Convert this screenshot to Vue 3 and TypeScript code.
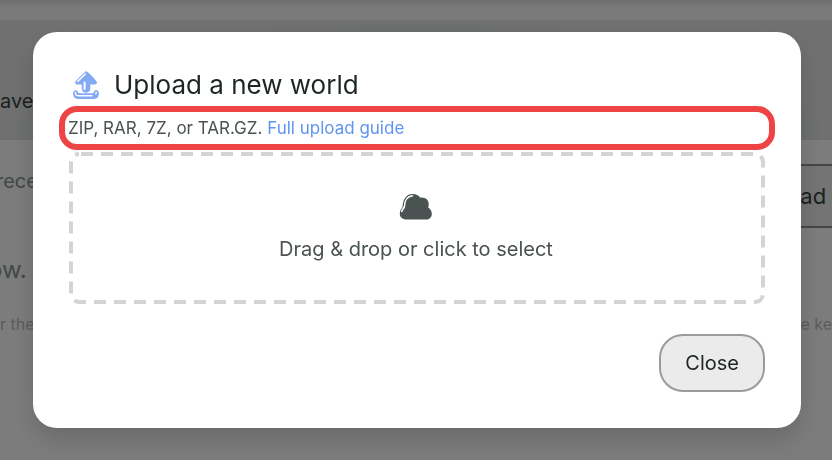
<script setup lang="ts">
import { ref } from 'vue'

const open = ref(true)
const picker = ref<HTMLInputElement | null>(null)

function pickFile(): void {
  picker.value?.click()
}
</script>

<template>
  <div class="page">
    <div class="topbar"></div>
    <div class="hero"><span class="hero-text">ave</span></div>
    <div class="content">
      <div class="row recent">
        <span>rece</span>
        <button type="button" class="page-button">ad W</button>
      </div>
      <p class="row status">ow.</p>
      <div class="row note"><span>r the</span><span>e ke</span></div>
    </div>
  </div>

  <div v-if="open" class="backdrop">
    <section class="modal" role="dialog" aria-modal="true" aria-labelledby="modal-title">
      <header class="heading">
        <svg class="upload-icon" viewBox="0 0 28 30" aria-hidden="true">
          <path d="M14 2C11.300 4 7.500 8.300 4.500 11.200C3.200 12.800 4 14 5.500 13.800H10.500V18.500C10.500 23 17.500 23 17.500 18.500V13.800H22.500C24.300 13.800 24.800 12.600 23.500 11.200C20.800 8 17.400 4.200 14 2Z" fill="#84a9f5" stroke="#84a9f5" stroke-width="1.500" stroke-linejoin="round" />
          <path d="M5.800 11.300L13.200 4" fill="none" stroke="#fff" stroke-width="1.600" stroke-linecap="round" />
          <path d="M12.600 12.500V19" fill="none" stroke="#fff" stroke-width="2" stroke-linecap="round" />
          <path d="M2.500 21.500C1.500 22.500 1.500 26 3.500 27.500Q4.300 28.200 6 28.200H22Q24 28.200 25 27C26.600 25 26.500 22.500 25.500 21.500C24 20 22.500 21.500 22.300 23Q22 24 20.500 24H7.500Q6 24 5.700 23C5.300 21.300 3.800 20.300 2.500 21.500Z" fill="#84a9f5" stroke="#84a9f5" stroke-width="1.500" stroke-linejoin="round" />
          <path d="M3.500 22.500Q3.200 25.600 6 25.800H20M23.800 23.800L24.300 22.500" fill="none" stroke="#fff" stroke-width="1.400" stroke-linecap="round" />
        </svg>
        <h1 id="modal-title">Upload a new world</h1>
      </header>

      <p class="formats">ZIP, RAR, 7Z, or TAR.GZ. <a href="#guide">Full upload guide</a></p>

      <button type="button" class="dropzone" @click="pickFile">
        <svg class="outline" aria-hidden="true">
          <rect class="outline-rect" x="2" y="2" rx="8" />
        </svg>
        <svg class="cloud-icon" viewBox="0 0 34 28" aria-hidden="true">
          <path d="M8 26.500C3 26.500 .800 24 .800 20.500C.800 17.500 2.300 15.800 3.500 14.300C3.800 7 7 1.200 13.500 1.100C17 1 19.500 2.500 21.500 4.700C26 4 29.700 7 29.700 11C29.700 12.500 29.500 13.500 29.200 14.500C31.500 16 32.800 18 32.800 21C32.800 24.500 30.300 26.500 27 26.500Z" fill="#4a5351" />
          <path d="M2.800 18.500C2.800 16.800 4.200 16 5.300 14.300C5.500 8.200 8 3.300 13.500 2.800" fill="none" stroke="#fff" stroke-width="1.600" stroke-linecap="round" />
        </svg>
        <span>Drag &amp; drop or click to select</span>
      </button>
      <input ref="picker" type="file" accept=".zip,.rar,.7z,.tar.gz" aria-labelledby="modal-title" hidden />

      <footer class="actions">
        <button type="button" class="close" @click="open = false">Close</button>
      </footer>
    </section>
  </div>
</template>

<style>
body {
  margin: 0;
}
</style>

<style scoped>
.page,
.backdrop {
  font-family: Inter, "Liberation Sans", sans-serif;
  box-sizing: border-box;
}

.page {
  height: 100vh;
  overflow: hidden;
  background: #f8f8f8;
}

.topbar {
  height: 20px;
  background: linear-gradient(#dedede, #f4f4f4 8px);
}

.hero {
  height: 120px;
  display: flex;
  align-items: center;
  background:
    radial-gradient(ellipse 50% 120px at 50% 100%, #d6dedb 92%, transparent 98%),
    #e0e0e0;
}

.hero-text {
  padding-top: 42px;
  font-size: 20px;
  line-height: 40px;
  color: #36423f;
}

.row {
  display: flex;
  justify-content: space-between;
  margin: 0;
  color: #84918e;
}

.recent {
  margin-left: -4px;
  padding-top: 24px;
  font-size: 20px;
  line-height: 34px;
}

.page-button {
  height: 64px;
  box-sizing: border-box;
  margin-right: -46px;
  padding: 0 24px;
  border: solid #84918e;
  border-width: 2px 0;
  background: #e8e8e8;
  color: #36423f;
  font: inherit;
  font-size: 22px;
  white-space: nowrap;
}

.status {
  margin-left: -12px;
  padding-top: 26px;
  font-size: 24px;
  line-height: 32px;
}

.note {
  padding-top: 26px;
  font-size: 16px;
  line-height: 24px;
  color: #b8b8b8;
}

.backdrop {
  position: fixed;
  inset: 0;
  padding: 32px 31px 32px 33px;
  background: rgb(0 0 0 / 50%);
}

.modal {
  display: flex;
  flex-direction: column;
  padding: 36px;
  border-radius: 24px;
  background: #fff;
  box-shadow: 0 12px 24px rgb(0 0 0 / 14%);
}

.heading {
  display: flex;
  align-items: center;
  gap: 14px;
  height: 34px;
  padding-left: 3px;
}

.upload-icon {
  width: 28px;
  height: 30px;
}

h1 {
  margin: 0;
  font-size: 26px;
  font-weight: 400;
  line-height: 34px;
  color: #1d2624;
}

.formats {
  margin: 4px -10px 2px;
  padding: 0 3px;
  border: 6px solid #ef4444;
  border-radius: 18px;
  font-size: 17px;
  line-height: 32px;
  color: #4a5351;
}

.formats a {
  color: #6095ef;
  text-decoration: none;
}

.dropzone {
  position: relative;
  display: flex;
  flex-direction: column;
  align-items: center;
  gap: 14px;
  height: 152px;
  padding: 41px 2px 0 0;
  border: 0;
  background: none;
  color: #4a5351;
  font: inherit;
  font-size: 20px;
  line-height: 28px;
  cursor: pointer;
}

.outline {
  position: absolute;
  inset: 0;
  width: 100%;
  height: 100%;
}

.outline-rect {
  width: calc(100% - 4px);
  height: calc(100% - 4px);
  fill: none;
  stroke: #d4d4d4;
  stroke-width: 4px;
  stroke-dasharray: 12px 8px;
  stroke-dashoffset: -2px;
}

.cloud-icon {
  width: 34px;
  height: 28px;
}

.actions {
  display: flex;
  justify-content: flex-end;
  padding-top: 30px;
}

.close {
  height: 58px;
  padding: 0 24px;
  border: 2px solid #9b9b9b;
  border-radius: 24px;
  background: #ebebeb;
  color: #1d2624;
  font: inherit;
  font-size: 20px;
  cursor: pointer;
}
</style>
